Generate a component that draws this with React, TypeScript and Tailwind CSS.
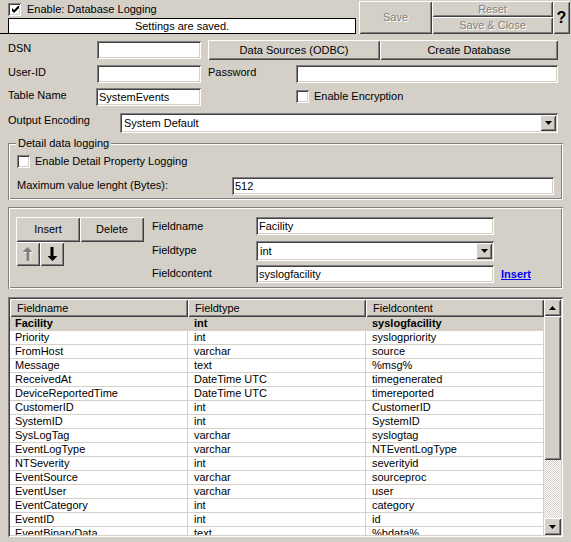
import React from "react";

const raised =
	"bg-[#d4d0c8] shadow-[inset_1px_1px_#fff,inset_-1px_-1px_#404040,inset_2px_2px_#d4d0c8,inset_-2px_-2px_#808080]";
const sunken =
	"bg-white shadow-[inset_1px_1px_#808080,inset_-1px_-1px_#fff,inset_2px_2px_#404040,inset_-2px_-2px_#d4d0c8]";
const etched =
	"shadow-[inset_1px_1px_#808080,inset_-1px_-1px_#fff,inset_2px_2px_#fff,inset_-2px_-2px_#808080]";
const disabledText = "text-[#808080] [text-shadow:1px_1px_0_#fff]";

const rows = [
	["Facility", "int", "syslogfacility"],
	["Priority", "int", "syslogpriority"],
	["FromHost", "varchar", "source"],
	["Message", "text", "%msg%"],
	["ReceivedAt", "DateTime UTC", "timegenerated"],
	["DeviceReportedTime", "DateTime UTC", "timereported"],
	["CustomerID", "int", "CustomerID"],
	["SystemID", "int", "SystemID"],
	["SysLogTag", "varchar", "syslogtag"],
	["EventLogType", "varchar", "NTEventLogType"],
	["NTSeverity", "int", "severityid"],
	["EventSource", "varchar", "sourceproc"],
	["EventUser", "varchar", "user"],
	["EventCategory", "int", "category"],
	["EventID", "int", "id"],
	["EventBinaryData", "text", "%bdata%"],
	["MaxAvailable", "int", "%maxavailable%"],
];

function Check({ checked }: { checked?: boolean }) {
	return (
		<span className={`flex h-[13px] w-[13px] shrink-0 items-center justify-center ${sunken}`}>
			{checked && (
				<svg width="7" height="7" viewBox="0 0 7 7" className="ml-[1px] mt-[1px]">
					<polygon points="0,2 2,4 7,-1 7,2 2,7 0,5" fill="#000" />
				</svg>
			)}
		</span>
	);
}

function DownTri() {
	return (
		<svg width="7" height="4" viewBox="0 0 7 4">
			<polygon points="0,0 7,0 3.5,4" fill="#000" />
		</svg>
	);
}

function UpTri() {
	return (
		<svg width="7" height="4" viewBox="0 0 7 4">
			<polygon points="0,4 7,4 3.5,0" fill="#000" />
		</svg>
	);
}

function Input({ w, value }: { w: string; value?: string }) {
	return <div className={`${w} h-[18px] shrink-0 pl-[3px] leading-[18px] ${sunken}`}>{value}</div>;
}

function Select({ w, value }: { w: string; value: string }) {
	return (
		<div className={`${w} flex h-[20px] shrink-0 items-center ${sunken} p-[2px]`}>
			<span className="flex-1 pl-[2px]">{value}</span>
			<span className={`flex h-[16px] w-[16px] items-center justify-center ${raised}`}>
				<DownTri />
			</span>
		</div>
	);
}

function Button({ w, h, children, disabled }: { w: string; h: string; children: React.ReactNode; disabled?: boolean }) {
	return (
		<div className={`${w} ${h} flex shrink-0 items-center justify-center ${raised} ${disabled ? disabledText : ""}`}>
			{children}
		</div>
	);
}

function ArrowIcon({ down, gray }: { down?: boolean; gray?: boolean }) {
	return (
		<svg width="10" height="14" viewBox="0 0 10 14" className={down ? "rotate-180" : ""}>
			{gray && <polygon points="5.5,1 10.5,6 7.5,6 7.5,15 4.5,15 4.5,6 0.5,6" fill="#fff" />}
			<polygon points="4.5,0 9.5,5 6.5,5 6.5,14 3.5,14 3.5,5 -0.5,5" fill={gray ? "#808080" : "#000"} />
		</svg>
	);
}

export default function App() {
	return (
		<div className="h-[542px] w-[571px] overflow-hidden bg-[#d4d0c8] font-['Liberation_Sans',Arial,sans-serif] text-[11px] leading-[13px] text-black">
			{/* top bar */}
			<div className="flex h-[34px]">
				<div className="flex w-[356px] flex-col">
					<div className="flex h-[18px] items-center gap-[6px] pl-[8px]">
						<Check checked />
						<span>Enable: Database Logging</span>
					</div>
					<div className="h-[16px] border-b border-black pl-[8px]">
						<div className="h-full border-x border-t border-black bg-white text-center leading-[14px]">Settings are saved.</div>
					</div>
				</div>
				<div className="ml-[3px] mt-[1px] flex">
					<Button w="w-[73px]" h="h-[33px]" disabled>
						Save
					</Button>
					<div className="flex w-[121px] flex-col">
						<Button w="w-[121px]" h="h-[16px]" disabled>
							Reset
						</Button>
						<Button w="w-[121px]" h="h-[17px]" disabled>
							Save &amp; Close
						</Button>
					</div>
					<Button w="w-[17px]" h="h-[33px]">
						<span className="text-[16px] font-bold">?</span>
					</Button>
				</div>
			</div>

			{/* connection */}
			<div className="mt-[6px] flex h-[20px] items-center pl-[8px]">
				<span className="mb-[4px] w-[89px]">DSN</span>
				<Input w="w-[104px]" />
				<div className="ml-[7px] flex">
					<Button w="w-[172px]" h="h-[20px]">Data Sources (ODBC)</Button>
					<Button w="w-[178px]" h="h-[20px]">Create Database</Button>
				</div>
			</div>
			<div className="mt-[4px] flex h-[19px] items-center pl-[8px]">
				<span className="mb-[2px] w-[89px]">User-ID</span>
				<Input w="w-[104px]" />
				<span className="mb-[2px] ml-[7px] w-[88px]">Password</span>
				<Input w="w-[262px]" />
			</div>
			<div className="mt-[4px] flex h-[19px] items-center pl-[8px]">
				<span className="mb-[2px] w-[88px]">Table Name</span>
				<Input w="w-[105px]" value="SystemEvents" />
				<div className="ml-[95px] flex items-center gap-[5px]">
					<Check />
					<span>Enable Encryption</span>
				</div>
			</div>
			<div className="mt-[7px] flex h-[20px] items-center pl-[8px]">
				<span className="mb-[6px] w-[112px]">Output Encoding</span>
				<Select w="w-[438px]" value="System Default" />
			</div>

			{/* detail group */}
			<div className={`relative ml-[8px] mt-[10px] h-[57px] w-[555px] pl-[9px] pt-[12px] ${etched}`}>
				<span className="absolute left-[8px] top-[-6px] bg-[#d4d0c8] px-[2px]">Detail data logging</span>
				<div className="flex h-[13px] items-center gap-[5px]">
					<Check />
					<span>Enable Detail Property Logging</span>
				</div>
				<div className="mt-[9px] flex h-[18px] items-center">
					<span className="mb-[2px] w-[215px]">Maximum value lenght (Bytes):</span>
					<Input w="w-[322px]" value="512" />
				</div>
			</div>

			{/* field editor */}
			<div className={`ml-[8px] mt-[7px] flex h-[82px] w-[555px] pl-[8px] pt-[10px] ${etched}`}>
				<div className="flex w-[128px] flex-col">
					<div className="flex">
						<Button w="w-[64px]" h="h-[25px]">Insert</Button>
						<Button w="w-[64px]" h="h-[25px]">Delete</Button>
					</div>
					<div className="flex">
						<Button w="w-[24px]" h="h-[24px]">
							<ArrowIcon gray />
						</Button>
						<Button w="w-[24px]" h="h-[24px]">
							<ArrowIcon down />
						</Button>
					</div>
				</div>
				<div className="ml-[8px] flex flex-col">
					<div className="flex h-[18px] items-center">
						<span className="w-[104px]">Fieldname</span>
						<Input w="w-[238px]" value="Facility" />
					</div>
					<div className="mt-[6px] flex h-[20px] items-center">
						<span className="mb-[2px] w-[104px]">Fieldtype</span>
						<Select w="w-[238px]" value="int" />
					</div>
					<div className="mt-[4px] flex h-[18px] items-center">
						<span className="mb-[2px] w-[104px]">Fieldcontent</span>
						<Input w="w-[238px]" value="syslogfacility" />
						<span className="ml-[7px] font-bold text-[#0000ff] underline">Insert</span>
					</div>
				</div>
			</div>

			{/* list view */}
			<div className={`ml-[8px] mt-[8px] flex h-[240px] w-[555px] p-[2px] ${sunken}`}>
				<div className="flex flex-1 flex-col overflow-hidden">
					<div className="flex h-[18px] shrink-0">
						{["Fieldname", "Fieldtype", "Fieldcontent"].map((h) => (
							<div key={h} className={`flex h-full w-[178px] items-center pl-[7px] ${raised}`}>
								{h}
							</div>
						))}
					</div>
					{rows.map((r, i) => (
						<div key={r[0]} className={`flex h-[14px] shrink-0 ${i === 0 ? "bg-[#d4d0c8] font-bold" : "bg-white"}`}>
							{r.map((c, j) => (
								<div
									key={j}
									className={`h-full w-[178px] border-b border-r border-[#d4d0c8] leading-[13px] ${j === 0 ? "pl-[5px]" : "pl-[6px]"}`}
								>
									{c}
								</div>
							))}
						</div>
					))}
				</div>
				<div className="flex w-[17px] flex-col">
					<div className={`flex h-[17px] items-center justify-center ${raised}`}>
						<UpTri />
					</div>
					<div className={`h-[144px] ${raised}`} />
					<div className="flex-1 bg-[repeating-conic-gradient(#fff_0_25%,#d4d0c8_0_50%)] bg-[length:2px_2px]" />
					<div className={`flex h-[17px] items-center justify-center ${raised}`}>
						<DownTri />
					</div>
				</div>
			</div>
		</div>
	);
}
